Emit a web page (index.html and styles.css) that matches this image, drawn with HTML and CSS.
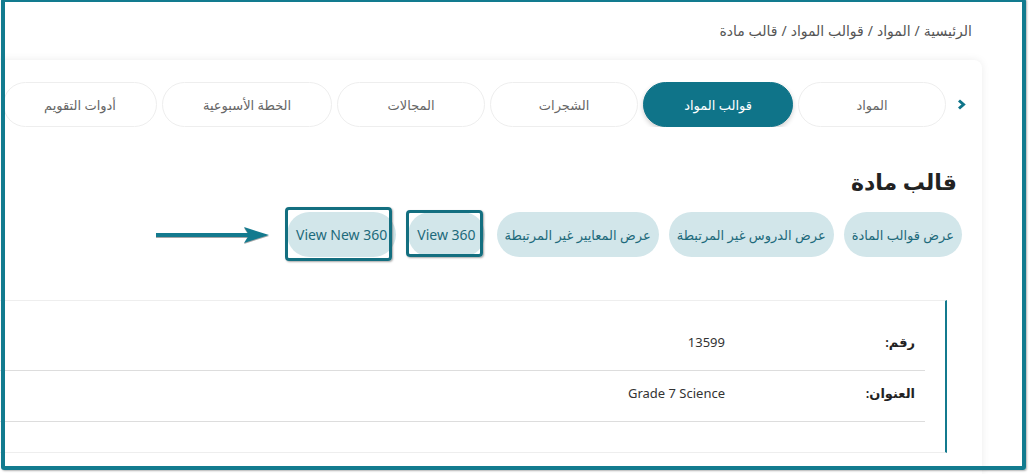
FILE: index.html
```html
<!DOCTYPE html>
<html lang="ar" dir="rtl">
<head>
    <meta charset="UTF-8">
    <meta name="viewport" content="width=device-width, initial-scale=1.0">
    <title>قالب مادة</title>
    <link rel="stylesheet" href="styles.css">
</head>
<body>
    <div class="page">
        <nav class="breadcrumb">
            <a href="#">الرئيسية</a> / <a href="#">المواد</a> / <a href="#">قوالب المواد</a> / <span>قالب مادة</span>
        </nav>

        <section class="card">
            <div class="tabs">
                <svg class="tabs-arrow" width="9" height="11" viewBox="0 0 9 11">
                    <polyline points="2,1.5 6.5,5.5 2,9.5" fill="none" stroke="#0f7489" stroke-width="3"/>
                </svg>
                <a class="tab" href="#">المواد</a>
                <a class="tab active" href="#">قوالب المواد</a>
                <a class="tab" href="#">الشجرات</a>
                <a class="tab" href="#">المجالات</a>
                <a class="tab" href="#">الخطة الأسبوعية</a>
                <a class="tab" href="#">أدوات التقويم</a>
            </div>

            <h1 class="title">قالب مادة</h1>

            <div class="actions">
                <button class="pill">عرض قوالب المادة</button>
                <button class="pill">عرض الدروس غير المرتبطة</button>
                <button class="pill">عرض المعايير غير المرتبطة</button>
                <button class="pill pill-en mark mark-small" dir="ltr">View 360</button>
                <button class="pill pill-en mark mark-big" dir="ltr">View New 360</button>
                <!-- pointer towards the new viewer -->
                <svg class="pointer" width="113" height="20" viewBox="0 0 113 20">
                    <line x1="0" y1="10" x2="96" y2="10" stroke="#137a8e" stroke-width="4"/>
                    <polygon points="88,2 113,10 88,18 93,10" fill="#137a8e"/>
                </svg>
            </div>

            <div class="details">
                <div class="row">
                    <div class="label">رقم:</div>
                    <div class="value">13599</div>
                </div>
                <div class="row">
                    <div class="label">العنوان:</div>
                    <div class="value" dir="ltr">Grade 7 Science</div>
                </div>
            </div>
        </section>
    </div>

    <div class="frame"></div>
</body>
</html>
```

FILE: styles.css
```css
html, body {
    margin: 0;
    height: 100%;
    overflow: hidden;
}
body {
    font-family: "Noto Sans", "DejaVu Sans", sans-serif;
    background-color: #fff;
    color: #333;
}
.page {
    padding-right: 48px;
}

/* Breadcrumb */
.breadcrumb {
    height: 60px;
    display: flex;
    align-items: center;
    gap: 4px;
    margin-right: 10px;
    font-size: 14px;
    color: #555;
}
.breadcrumb a {
    color: #555;
    text-decoration: none;
}

/* Card */
.card {
    box-sizing: border-box;
    height: 414px;
    margin-left: -40px;
    background-color: #fff;
    border-radius: 8px 8px 0 0;
    box-shadow: 0 0 8px rgba(0, 0, 0, 0.08);
    padding: 22px 16px 0 16px;
}

/* Tabs */
.tabs {
    display: flex;
    align-items: center;
    gap: 5px;
    overflow: hidden;
}
.tabs-arrow {
    flex-shrink: 0;
    margin-left: 6px;
}
.tab {
    flex-shrink: 0;
    box-sizing: border-box;
    min-width: 148px;
    height: 45px;
    padding: 0 40px;
    display: flex;
    align-items: center;
    justify-content: center;
    border: 1px solid #eee;
    border-radius: 23px;
    font-size: 13px;
    color: #666;
    text-decoration: none;
    background-color: #fff;
}
.tab.active {
    background-color: #0f7489;
    border-color: #0f7489;
    color: #fff;
    box-shadow: 0 2px 5px rgba(0, 0, 0, 0.2);
}

.title {
    margin: 39px 9px 0 0;
    font-size: 22px;
    font-weight: bold;
    color: #222;
    line-height: 30px;
}

/* Action buttons */
.actions {
    display: flex;
    align-items: center;
    gap: 10px;
    margin: 16px 4px 0 0;
}
.pill {
    position: relative;
    height: 45px;
    padding: 0 8px;
    border: none;
    border-radius: 23px;
    background-color: #d2e6ea;
    color: #1d6a7b;
    font-family: inherit;
    font-size: 13px;
    cursor: pointer;
}
.pill-en {
    font-size: 14px;
    padding: 0 9px;
}
.mark::after {
    content: "";
    position: absolute;
    border: 3px solid #136f80;
    border-radius: 4px;
    box-shadow: 1px 1px 2px rgba(0, 0, 0, 0.35);
}
.mark-small {
    margin-right: 2px;
}
.mark-small::after {
    top: -2px;
    right: 2px;
    bottom: 0;
    left: -2px;
}
.mark-big {
    margin-right: 2px;
}
.mark-big::after {
    top: -5px;
    right: 4px;
    bottom: -4px;
    left: -2px;
}
.pointer {
    margin-right: 8px;
    filter: drop-shadow(0 1px 0 rgba(0, 0, 0, 0.35));
}

/* Details table */
.details {
    margin: 43px 19px 0 0;
    padding: 19px 20px 30px 0;
    border-top: 1px solid #eee;
    border-bottom: 1px solid #eee;
    border-right: 2px solid #137a8e;
}
.row {
    display: grid;
    grid-template-columns: 200px 1fr;
    height: 50px;
    align-items: center;
    border-bottom: 1px solid #ddd;
    font-size: 13px;
}
.label {
    padding: 0 10px 6px 0;
    font-weight: 600;
    color: #222;
}
.value {
    padding-bottom: 6px;
    color: #333;
    text-align: right;
}

/* outer highlight border */
.frame {
    position: fixed;
    left: 1px;
    top: -2px;
    width: 1025px;
    height: 472px;
    box-sizing: border-box;
    border: 4px solid #127b8f;
    border-radius: 3px;
    box-shadow: 1px 1px 2px rgba(0, 0, 0, 0.3);
    pointer-events: none;
}
```
